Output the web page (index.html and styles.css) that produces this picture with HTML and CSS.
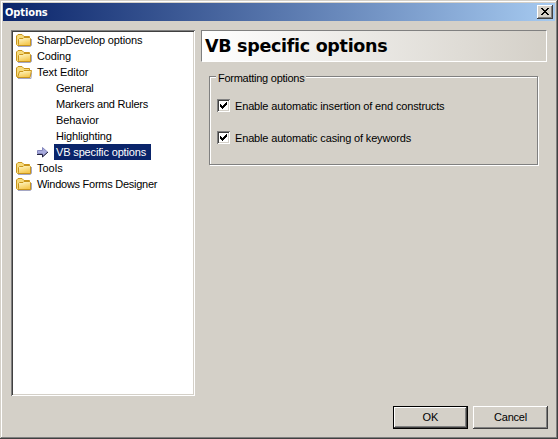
FILE: index.html
```html
<!DOCTYPE html>
<html lang="en">
<head>
<meta charset="utf-8">
<title>Options</title>
<link rel="stylesheet" href="styles.css">
</head>
<body>
<svg class="defs" width="0" height="0" aria-hidden="true">
  <defs>
    <linearGradient id="fold" x1="0" y1="0" x2="0.4" y2="1">
      <stop offset="0" stop-color="#fffbd0"/><stop offset="1" stop-color="#f5c850"/>
    </linearGradient>
    <symbol id="folder" viewBox="0 0 16 16">
      <path d="M2 14.5h12.500l1-1V7" fill="none" stroke="#a5a7c4"/>
      <path d="M.5 12.500V4L2 2.500H6L8 4.500H13.500V6.500L14.500 7.500V13.500H1.500Z" fill="#f7dc7c" stroke="#c9951c"/>
      <path d="M2.500 12.500V7.500L3.500 6.500H7L8 5.500H13.500L14.500 6.500V13.500H2.500Z" fill="url(#fold)" stroke="#c9951c"/>
    </symbol>
    <symbol id="folder-open" viewBox="0 0 16 16">
      <path d="M2 14.5h13l.5-6" fill="none" stroke="#a5a7c4"/>
      <path d="M.5 12.500V4L2 2.500H6L8 4.500H13.500V13.500H1.500Z" fill="#f7dc7c" stroke="#c9951c"/>
      <path d="M1.500 13.500L3.500 7.500H7L8 6.500H15.500L14 13.500Z" fill="url(#fold)" stroke="#c9951c"/>
    </symbol>
    <symbol id="check" viewBox="0 0 7 7">
      <path d="M0 2h1v1h1v1h1v-1h1v-1h1v-1h1v-1h1v3h-1v1h-1v1h-1v1h-1v1h-1v-1h-1v-1h-1z" fill="#000"/>
    </symbol>
  </defs>
</svg>
<main class="window">
  <header class="titlebar">
    <h1 class="title">Options</h1>
    <button class="close" aria-label="Close"><svg width="8" height="7" shape-rendering="crispEdges"><path d="M0 0h2v1h1v1h2v-1h1v-1h2v1h-1v1h-1v1h-1v1h1v1h1v1h1v1h-2v-1h-1v-1h-2v1h-1v1h-2v-1h1v-1h1v-1h1v-1h-1v-1h-1v-1h-1z"/></svg></button>
  </header>
  <div class="content">
    <ul class="tree">
      <li class="node"><svg class="icon"><use href="#folder"/></svg><span>SharpDevelop options</span></li>
      <li class="node"><svg class="icon"><use href="#folder"/></svg><span>Coding</span></li>
      <li class="node"><svg class="icon"><use href="#folder-open"/></svg><span class="t-editor">Text Editor</span></li>
      <li class="node child"><span class="t-general">General</span></li>
      <li class="node child"><span class="t-markers">Markers and Rulers</span></li>
      <li class="node child"><span class="t-behavior">Behavior</span></li>
      <li class="node child"><span>Highlighting</span></li>
      <li class="node current"><svg class="arrow" width="12" height="12" viewBox="0 0 12 12"><path d="M.5 4.500H5.500V1.500L10.500 6L5.500 10.500V7.500H.5Z" fill="#a7aadc" stroke="#8587bd"/><path d="M0 8.500H5.500V11L11 6" fill="none" stroke="#22223f"/></svg><span class="selected">VB specific options</span></li>
      <li class="node"><svg class="icon"><use href="#folder"/></svg><span class="t-tools">Tools</span></li>
      <li class="node"><svg class="icon"><use href="#folder"/></svg><span class="t-forms">Windows Forms Designer</span></li>
    </ul>
    <section class="panel">
      <h2 class="heading"><span>VB specific options</span></h2>
      <div class="group">
        <div class="legend"><span>Formatting options</span></div>
        <div class="option"><span class="box"><svg width="7" height="7" shape-rendering="crispEdges"><use href="#check"/></svg></span><span class="label">Enable automatic insertion of end constructs</span></div>
        <div class="option"><span class="box"><svg width="7" height="7" shape-rendering="crispEdges"><use href="#check"/></svg></span><span class="label">Enable automatic casing of keywords</span></div>
      </div>
    </section>
  </div>
  <footer class="actions">
    <button class="button default"><span>OK</span></button>
    <button class="button"><span class="t-cancel">Cancel</span></button>
  </footer>
</main>
</body>
</html>
```
FILE: styles.css
```css
* { box-sizing: border-box; }
body { margin: 0; background: #d4d0c8; font: 11px/16px "Liberation Sans", Arial, sans-serif; color: #000; }
.defs { display: block; }
svg { display: block; flex: none; }
.window {
  width: 558px; height: 439px; padding: 3px 2px 2px 3px;
  background: #d4d0c8;
  box-shadow: inset -1px -1px #404040, inset 1px 1px #d4d0c8, inset -2px -2px #808080, inset 2px 2px #fff;
  overflow: hidden;
}
.titlebar {
  display: flex; align-items: center; justify-content: space-between;
  width: 552px; height: 18px; padding: 0 2px;
  background: linear-gradient(90deg, #0a246a, #a6caf0);
}
.title { margin: 0; padding-top: 1px; font: bold 11px/17px "DejaVu Sans Condensed", "DejaVu Sans", sans-serif; font-stretch: condensed; letter-spacing: -.1px; color: #fff; }
button { margin: 0; padding: 0; border: 0; border-radius: 0; background: #d4d0c8; color: #000; font: inherit; display: flex; align-items: center; justify-content: center; }
.close { width: 16px; height: 14px; padding: 0 1px 1px 0; box-shadow: inset -1px -1px #404040, inset 1px 1px #fff, inset -2px -2px #808080; }
.content { display: flex; gap: 6px; padding: 9px 0 0 8px; }
.tree {
  width: 184px; height: 366px; margin: 0; padding: 2px; list-style: none; background: #fff;
  box-shadow: inset 1px 1px #808080, inset -1px -1px #fff, inset 2px 2px #404040, inset -2px -2px #d4d0c8;
}
.node { display: flex; align-items: center; height: 16px; padding-left: 3px; white-space: nowrap; letter-spacing: -.15px; }
.icon { width: 16px; height: 16px; margin-right: 5px; }
.child { padding-left: 43px; }
.current { padding-left: 24px; }
.arrow { margin-right: 5px; }
.selected { width: 97px; height: 16px; padding-left: 2px; background: #0a246a; color: #fff; }
.t-editor { letter-spacing: -.05px; }
.t-general, .t-markers { letter-spacing: -.22px; }
.t-behavior { letter-spacing: -.07px; }
.t-tools { letter-spacing: 0; }
.t-forms { letter-spacing: -.26px; }
.panel { width: 346px; }
.heading {
  height: 32px; margin: 0; padding-left: 3px;
  border: 1px solid; border-color: #808080 #fff #fff #808080;
  background: linear-gradient(90deg, #fff, #d4d0c8);
  font: bold 17.5px/31px "DejaVu Sans", sans-serif; letter-spacing: -.3px; white-space: nowrap;
}
.group {
  width: 329px; height: 89px; margin: 14px 0 0 8px; padding-left: 7px;
  border: 1px solid #808080; box-shadow: 1px 1px #fff, inset 1px 1px #fff;
}
.legend { display: flex; height: 16px; margin-top: -8px; }
.legend span { width: 90px; padding: 1px 0 0 2px; background: #d4d0c8; margin-left: -1px; letter-spacing: -.26px; white-space: nowrap; }
.option { display: flex; align-items: center; height: 16px; margin-top: 12px; white-space: nowrap; }
.option + .option { margin-top: 16px; }
.label { padding-top: 2px; letter-spacing: -.16px; }
.box {
  display: flex; align-items: center; justify-content: center; width: 13px; height: 13px; margin-right: 5px; background: #fff;
  box-shadow: inset 1px 1px #808080, inset -1px -1px #fff, inset 2px 2px #404040, inset -2px -2px #d4d0c8;
}
.actions { display: flex; gap: 5px; padding: 10px 0 0 390px; }
.button { width: 75px; height: 23px; padding-bottom: 2px; box-shadow: inset -1px -1px #404040, inset 1px 1px #fff, inset -2px -2px #808080; }
.default { border: 1px solid #000; }
.t-cancel { letter-spacing: -.2px; }
```
